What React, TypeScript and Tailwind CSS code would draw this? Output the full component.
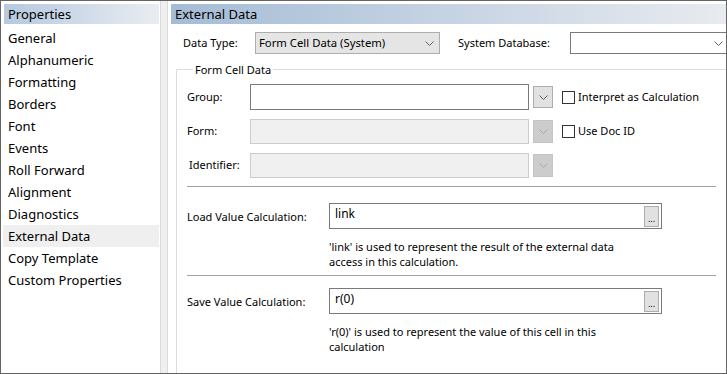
import React from "react";

const Chevron = ({ color = "#606060" }: { color?: string }) => (
  <svg width="9" height="5" viewBox="0 0 9 5" className="block">
    <polyline points="0.5,0.5 4.5,4.5 8.5,0.5" fill="none" stroke={color} strokeWidth="1" />
  </svg>
);

const items = [
  "General",
  "Alphanumeric",
  "Formatting",
  "Borders",
  "Font",
  "Events",
  "Roll Forward",
  "Alignment",
  "Diagnostics",
  "External Data",
  "Copy Template",
  "Custom Properties",
];

const DropBtn = ({ disabled }: { disabled?: boolean }) => (
  <div
    className={
      disabled
        ? "w-[20px] h-[23px] border border-[#c4c4c4] bg-[#cccccc] flex items-center justify-center"
        : "w-[20px] h-[22px] border border-[#adadad] bg-[#e1e1e1] flex items-center justify-center"
    }
  >
    <Chevron color={disabled ? "#a8a8a8" : "#606060"} />
  </div>
);

const CheckBox = ({ label }: { label: string }) => (
  <div className="flex items-center gap-[3px]">
    <div className="w-[13px] h-[13px] shrink-0 border border-[#333333] bg-white" />
    <span className="whitespace-nowrap">{label}</span>
  </div>
);

const CalcRow = ({ label, value, help }: { label: string; value: string; help: string[] }) => (
  <div className="flex">
    <div className="w-[142px] shrink-0 pt-[6px] whitespace-nowrap">{label}</div>
    <div className="flex flex-col shrink-0">
      <div className="w-[333px] h-[26px] border border-[#7a7a7a] flex items-start justify-between pl-[5px] pr-[2px]">
        <span className="leading-[18px] pt-[1px] text-[12px]">{value}</span>
        <div className="w-[15px] h-[21px] mt-[2px] border border-[#adadad] bg-[#e1e1e1] flex items-end justify-center pb-[3px] text-[9px] leading-[9px]">
          ...
        </div>
      </div>
      <div className="mt-[10px] leading-[15px] whitespace-nowrap">
        {help.map((h) => (
          <div key={h}>{h}</div>
        ))}
      </div>
    </div>
  </div>
);

export default function App() {
  return (
    <div
      className="w-[727px] h-[374px] border border-[#646464] bg-white flex overflow-hidden text-black"
      style={{ fontFamily: "'Noto Sans', 'Open Sans', sans-serif" }}
    >
      {/* Left panel */}
      <div className="w-[159px] shrink-0 pt-[3px] pl-[2px] text-[13px]">
        <div className="ml-[1px] h-[20px] w-[155px] bg-gradient-to-r from-[#b6c9df] to-[#e9edf1] pl-[4px] leading-[20px]">
          Properties
        </div>
        <div className="mt-[3px]">
          {items.map((it) => (
            <div
              key={it}
              className={
                "h-[22px] w-[156px] pl-[5px] leading-[22px] " + (it === "External Data" ? "bg-[#efefef]" : "")
              }
            >
              {it}
            </div>
          ))}
        </div>
      </div>

      {/* Splitter */}
      <div className="w-[8px] shrink-0 bg-[#efefef] border-l border-r border-[#dadada]" />

      {/* Right panel */}
      <div className="flex-1 min-w-0 pt-[3px] pl-[3px] text-[11px] flex flex-col">
        <div className="h-[20px] bg-gradient-to-r from-[#a5bcd6] to-[#e8ebef] pl-[4px] leading-[20px] text-[13px]">
          External Data
        </div>

        <div className="flex items-center mt-[8px] h-[22px] pl-[12px]">
          <div className="w-[72px] shrink-0">Data Type:</div>
          <div className="w-[185px] shrink-0 h-[22px] border border-[#adadad] bg-[#e5e5e5] flex items-center justify-between pl-[3px] pr-[5px]">
            <span className="text-[11.3px]">Form Cell Data (System)</span>
            <Chevron />
          </div>
          <div className="ml-[18px] w-[112px] shrink-0 whitespace-nowrap">System Database:</div>
          <div className="flex-1 h-[22px] border border-[#7a7a7a] border-r-0 flex items-center justify-end pr-[3px]">
            <Chevron />
          </div>
        </div>

        <fieldset className="mt-[8px] ml-[5px] -mr-[10px] flex-1 min-w-0 border-t border-l border-[#dcdcdc] pl-[10px]">
          <legend className="ml-[6px] px-[2px] leading-[15px]">Form Cell Data</legend>

          <div className="flex items-center mt-[7px] h-[26px]">
            <div className="w-[63px] shrink-0">Group:</div>
            <div className="w-[279px] shrink-0 h-[26px] border border-[#7a7a7a]" />
            <div className="ml-[4px]">
              <DropBtn />
            </div>
            <div className="ml-[9px]">
              <CheckBox label="Interpret as Calculation" />
            </div>
          </div>

          <div className="flex items-center mt-[9px] h-[25px]">
            <div className="w-[63px] shrink-0">Form:</div>
            <div className="w-[279px] shrink-0 h-[25px] border border-[#cccccc] bg-[#f0f0f0]" />
            <div className="ml-[4px]">
              <DropBtn disabled />
            </div>
            <div className="ml-[9px]">
              <CheckBox label="Use Doc ID" />
            </div>
          </div>

          <div className="flex items-center mt-[9px] h-[25px]">
            <div className="w-[63px] shrink-0 pl-[2px]">Identifier:</div>
            <div className="w-[279px] shrink-0 h-[25px] border border-[#cccccc] bg-[#f0f0f0]" />
            <div className="ml-[4px]">
              <DropBtn disabled />
            </div>
          </div>

          <div className="mt-[8px] h-px w-[529px] bg-[#a0a0a0]" />

          <div className="mt-[16px]">
            <CalcRow
              label="Load Value Calculation:"
              value="link"
              help={["'link' is used to represent the result of the external data", "access in this calculation."]}
            />
          </div>

          <div className="mt-[6px] h-px w-[529px] bg-[#a0a0a0]" />

          <div className="mt-[12px]">
            <CalcRow
              label="Save Value Calculation:"
              value="r(0)"
              help={["'r(0)' is used to represent the value of this cell in this", "calculation"]}
            />
          </div>
        </fieldset>
      </div>
    </div>
  );
}
